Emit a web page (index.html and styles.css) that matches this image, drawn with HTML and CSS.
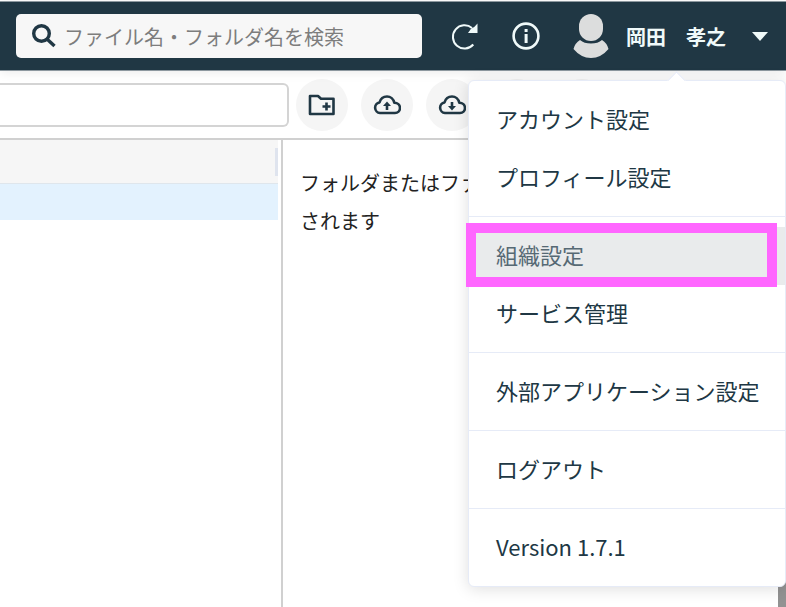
FILE: index.html
```html
<!DOCTYPE html>
<html lang="ja">
<head>
  <meta charset="UTF-8">
  <meta name="viewport" content="width=device-width, initial-scale=1.0">
  <title>ファイル一覧</title>
  <link rel="stylesheet" href="styles.css">
</head>
<body>
  <!-- Header -->
  <header class="header">
    <label class="search">
      <svg class="search-icon" viewBox="0 0 24 24" aria-hidden="true">
        <circle cx="9.500" cy="9.500" r="7.800"/>
        <path d="M15.200 15.200l7.300 6.800"/>
      </svg>
      <input class="search-input" type="search" placeholder="ファイル名・フォルダ名を検索" aria-label="検索">
    </label>
    <button class="header-button" type="button" aria-label="更新">
      <svg class="header-icon" viewBox="0 0 28 28">
        <path class="line" d="M22.300 22.500A11.600 11.600 0 1 1 21 6"/>
        <path class="fill" d="M26.500 1.500v9.500h-9.500l3-4.200 3.200-1.800z"/>
      </svg>
    </button>
    <button class="header-button" type="button" aria-label="情報">
      <svg class="header-icon" viewBox="0 0 28 28">
        <circle class="ring" cx="14" cy="14" r="12.400"/>
        <path class="fill" d="M12.600 7h3v3h-3zM12.600 12h3v9h-3z"/>
      </svg>
    </button>
    <button class="user" type="button">
      <svg class="avatar" viewBox="0 0 36 44" aria-hidden="true">
        <rect x="6" y="0" width="24" height="27" rx="12"/>
        <path d="M7 26q4 3.500 11 3.500T29 26q5 3 6.500 9Q28 44 18 44T.500 35Q2 29 7 26z"/>
      </svg>
      <span class="user-name">岡田　孝之</span>
      <span class="caret"></span>
    </button>

    <!-- User menu -->
    <nav class="menu">
      <ul class="menu-group">
        <li><a class="menu-item" href="#">アカウント設定</a></li>
        <li><a class="menu-item" href="#">プロフィール設定</a></li>
      </ul>
      <ul class="menu-group">
        <li><a class="menu-item active" href="#">組織設定</a></li>
        <li><a class="menu-item" href="#">サービス管理</a></li>
      </ul>
      <ul class="menu-group">
        <li><a class="menu-item" href="#">外部アプリケーション設定</a></li>
      </ul>
      <ul class="menu-group">
        <li><a class="menu-item" href="#">ログアウト</a></li>
      </ul>
      <ul class="menu-group">
        <li><span class="menu-item">Version 1.7.1</span></li>
      </ul>
    </nav>
  </header>

  <!-- Toolbar -->
  <div class="toolbar">
    <input class="path-input" type="text" aria-label="パス">
    <button class="tool" type="button" aria-label="フォルダ作成">
      <svg class="tool-icon" viewBox="0 0 28 28">
        <path d="M2 23V5H10l3 2.800h12.500V23z"/>
        <path d="M18.500 11.500v8M14.500 15.500h8"/>
      </svg>
    </button>
    <button class="tool" type="button" aria-label="アップロード">
      <svg class="tool-icon" viewBox="0 0 28 28">
        <path d="M7 22a5.300 5.300 0 0 1-.500-10.500C7.500 8 10.500 5.500 14 5.500s6.500 2.500 7.300 6.300C24.500 12 27 14 27 17s-2.300 5-5 5z"/>
        <path d="M14 19v-5"/>
        <path class="solid" d="M14 10.500l4 4.500h-8z"/>
      </svg>
    </button>
    <button class="tool" type="button" aria-label="ダウンロード">
      <svg class="tool-icon" viewBox="0 0 28 28">
        <path d="M7 22a5.300 5.300 0 0 1-.500-10.500C7.500 8 10.500 5.500 14 5.500s6.500 2.500 7.300 6.300C24.500 12 27 14 27 17s-2.300 5-5 5z"/>
        <path d="M14 11v5"/>
        <path class="solid" d="M14 19.500l4-4.500h-8z"/>
      </svg>
    </button>
    <button class="tool" type="button" aria-label="共有"></button>
    <button class="tool" type="button" aria-label="その他"></button>
  </div>

  <!-- Content -->
  <main class="content">
    <section class="list">
      <div class="list-head"><span class="resizer"></span></div>
      <div class="list-row"></div>
    </section>
    <section class="detail">
      <p class="detail-text">フォルダまたはファ<br>されます</p>
    </section>
    <div class="scrollbar"></div>
  </main>
</body>
</html>
```

FILE: styles.css
```css
* {
  box-sizing: border-box;
}

body {
  margin: 0;
  min-height: 100vh;
  display: flex;
  flex-direction: column;
  overflow: hidden;
  background: #fff;
  color: #203744;
  font-family: "Noto Sans CJK JP", "Noto Sans", sans-serif;
  font-size: 20px;
}

button {
  padding: 0;
  border: 0;
  background: none;
  color: inherit;
  font: inherit;
  cursor: pointer;
}

/* Header */
.header {
  position: relative;
  z-index: 10;
  display: flex;
  align-items: center;
  height: 70px;
  margin-top: 1px;
  padding: 0 18px 0 16px;
  border-top: 1px solid #8d989f;
  border-bottom: 1px solid #8d989f;
  background: #203744;
  color: #f0fafa;
  box-shadow: 0 2px 10px rgba(0, 0, 0, 0.08);
}

.search {
  flex: 1;
  display: flex;
  align-items: center;
  gap: 8px;
  height: 44px;
  margin-right: 29px;
  padding: 0 16px;
  border-radius: 5px;
  background: #f7f7f7;
}

.search-icon {
  width: 24px;
  height: 24px;
  fill: none;
  stroke: #203744;
  stroke-width: 3.4;
}

.search-input {
  flex: 1;
  min-width: 0;
  padding: 0;
  border: 0;
  outline: 0;
  background: none;
  font: inherit;
}

.search-input::placeholder {
  color: #7d7d7d;
}

.header-button {
  display: flex;
  margin-right: 33px;
}

.header-icon {
  width: 28px;
  height: 28px;
}

.header-icon .line,
.header-icon .ring {
  fill: none;
  stroke: #f0fafa;
  stroke-width: 2;
}

.header-icon .ring {
  stroke-width: 2.6;
}

.header-icon .fill {
  fill: #f0fafa;
}

.user {
  display: flex;
  align-items: center;
}

.avatar {
  width: 36px;
  height: 44px;
  margin-right: 17px;
  fill: #dcdddd;
}

.user-name {
  font-weight: 700;
}

.caret {
  margin-left: 26px;
  border: 8px solid transparent;
  border-top: 9px solid #f0fafa;
  border-bottom: 0;
}

/* User menu */
.menu {
  position: absolute;
  top: 78px;
  right: 0;
  width: 318px;
  border: 1px solid #e6ebf7;
  border-radius: 6px;
  background: #fff;
  color: #203744;
  font-size: 22px;
  box-shadow: 0 2px 16px rgba(0, 0, 0, 0.13);
}

.menu::before {
  content: "";
  position: absolute;
  top: -7px;
  right: 102px;
  width: 12px;
  height: 12px;
  border: 1px solid #e6ebf7;
  border-width: 1px 0 0 1px;
  background: #fff;
  transform: rotate(45deg);
}

.menu-group {
  margin: 0;
  padding: 10px 0 9px;
  list-style: none;
}

.menu-group + .menu-group {
  border-top: 1px solid #e6ebf7;
}

.menu-item {
  position: relative;
  display: block;
  padding: 0 27px 4px;
  color: inherit;
  line-height: 54px;
  text-decoration: none;
  white-space: nowrap;
}

.menu-item.active {
  background: #e9ebec;
  color: #566974;
}

/* Highlight frame around the active item */
.menu-item.active::after {
  content: "";
  position: absolute;
  inset: -4px 8px -2px -3px;
  border: 10px solid #ff66ff;
}

/* Toolbar */
.toolbar {
  display: flex;
  align-items: center;
  gap: 13px;
  height: 69px;
  border-bottom: 2px solid #d0d0d0;
}

.path-input {
  width: 289px;
  height: 44px;
  margin-right: -6px;
  border: 2px solid #d4d4d4;
  border-left: 0;
  border-radius: 0 6px 6px 0;
  background: #fff;
  font: inherit;
}

.tool {
  flex: none;
  display: flex;
  align-items: center;
  justify-content: center;
  width: 52px;
  height: 52px;
  border-radius: 50%;
  background: #f5f5f5;
}

.tool-icon {
  width: 28px;
  height: 28px;
  fill: none;
  stroke: #203744;
  stroke-width: 2.6;
  stroke-linejoin: round;
}

.tool-icon .solid {
  fill: #203744;
  stroke: none;
}

/* Content */
.content {
  flex: 1;
  display: flex;
}

.list {
  width: 283px;
  padding-right: 3px;
  border-right: 2px solid #d0d0d0;
}

.list-head {
  display: flex;
  align-items: center;
  justify-content: flex-end;
  height: 44px;
  border-bottom: 1px solid #dfe6ec;
  background: #f6f6f6;
}

.resizer {
  width: 3px;
  height: 28px;
  background: #dfe4ee;
}

.list-row {
  height: 36px;
  background: #e3f2fe;
}

.detail {
  flex: 1;
  padding: 24px 17px;
}

.detail-text {
  margin: 0;
  color: #222;
  line-height: 38px;
}

.scrollbar {
  width: 8px;
  background: #929292;
}
```
